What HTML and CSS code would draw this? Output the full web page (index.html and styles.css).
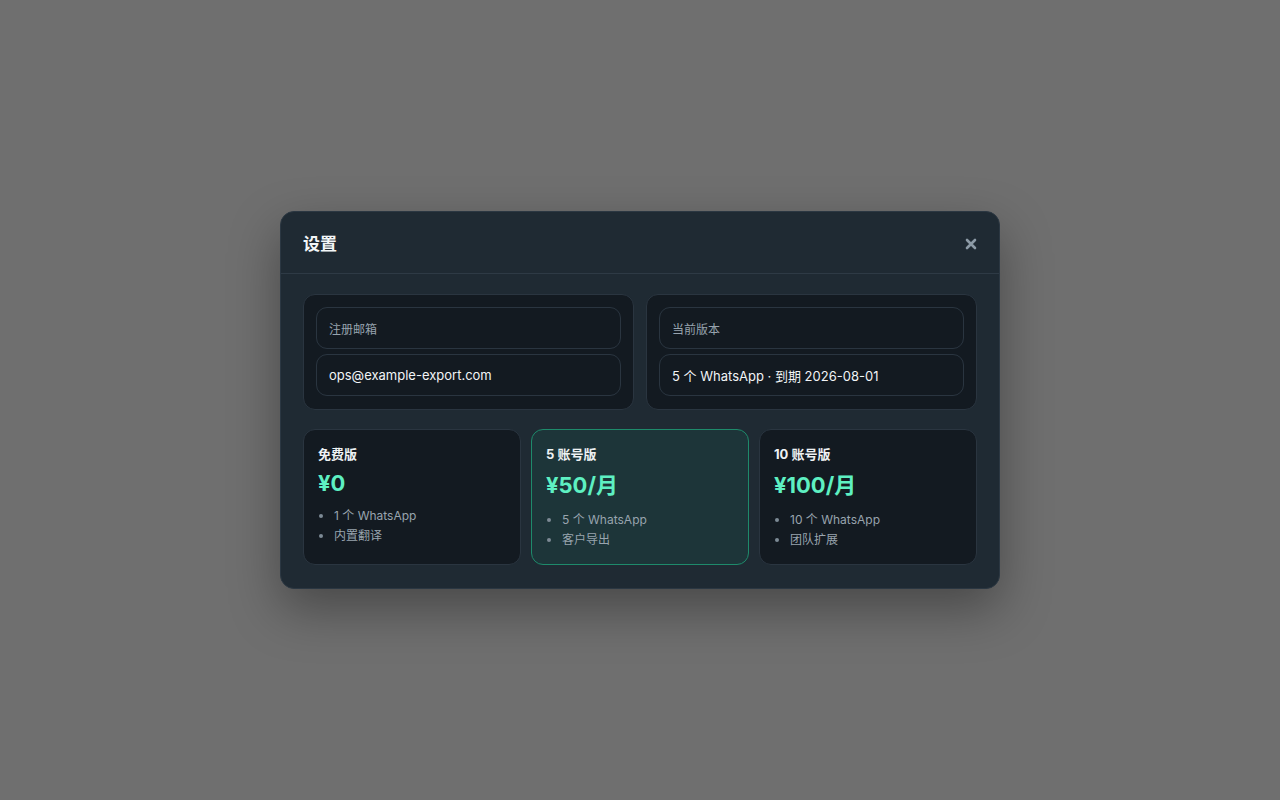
FILE: index.html
```html
<!DOCTYPE html>
<html lang="zh-CN">
<head>
<meta charset="utf-8">
<title>设置</title>
<link rel="stylesheet" href="styles.css">
</head>
<body>
<div class="overlay">
  <div class="modal">
    <div class="modal-header">
      <h2 class="modal-title">设置</h2>
      <button class="close-btn" aria-label="关闭">
        <svg width="12" height="12" viewBox="0 0 12 12"><path d="M2 2 L10 10 M10 2 L2 10" stroke="currentColor" stroke-width="2.6" stroke-linecap="round"/></svg>
      </button>
    </div>
    <div class="modal-body">
      <div class="info-row">
        <div class="info-card">
          <div class="field field-label">注册邮箱</div>
          <div class="field field-value">ops@example-export.com</div>
        </div>
        <div class="info-card">
          <div class="field field-label">当前版本</div>
          <div class="field field-value">5 个 WhatsApp · 到期 2026-08-01</div>
        </div>
      </div>
      <div class="plans">
        <div class="plan">
          <div class="plan-name">免费版</div>
          <div class="plan-price">¥0</div>
          <ul class="plan-features">
            <li>1 个 WhatsApp</li>
            <li>内置翻译</li>
          </ul>
        </div>
        <div class="plan plan-active">
          <div class="plan-name">5 账号版</div>
          <div class="plan-price plan-price-cjk">¥50/月</div>
          <ul class="plan-features">
            <li>5 个 WhatsApp</li>
            <li>客户导出</li>
          </ul>
        </div>
        <div class="plan">
          <div class="plan-name">10 账号版</div>
          <div class="plan-price plan-price-cjk">¥100/月</div>
          <ul class="plan-features">
            <li>10 个 WhatsApp</li>
            <li>团队扩展</li>
          </ul>
        </div>
      </div>
    </div>
  </div>
</div>
</body>
</html>
```

FILE: styles.css
```css
* { box-sizing: border-box; }
html, body {
  margin: 0;
  padding: 0;
  height: 100%;
}
body {
  background: #6f6f6f;
  font-family: Inter, "Noto Sans CJK SC", sans-serif;
  color: #e6edf3;
}
.overlay {
  height: 800px;
  display: flex;
  align-items: center;
  justify-content: center;
}
.modal {
  width: 720px;
  background: #1f2a33;
  border: 1px solid #2b3742;
  border-radius: 14px;
  box-shadow: 0 20px 50px rgba(0, 0, 0, 0.35);
}
.modal-header {
  height: 62px;
  padding: 0 22px;
  display: flex;
  align-items: center;
  justify-content: space-between;
  border-bottom: 1px solid #2e3a45;
}
.modal-title {
  margin: 0;
  font-size: 17px;
  font-weight: 700;
  color: #f3f6f8;
}
.close-btn {
  background: none;
  border: none;
  padding: 0;
  margin-top: 2px;
  color: #8c9aa6;
  display: flex;
  cursor: pointer;
}
.modal-body {
  padding: 20px 22px 23px;
  display: flex;
  flex-direction: column;
  gap: 19px;
}
.info-row {
  display: grid;
  grid-template-columns: 1fr 1fr;
  gap: 12px;
}
.info-card {
  background: #131a21;
  border: 1px solid #2a3540;
  border-radius: 12px;
  padding: 12px 12px 13px;
  display: flex;
  flex-direction: column;
  gap: 5px;
}
.field {
  height: 42px;
  border: 1px solid #2a3540;
  border-radius: 11px;
  padding: 0 12px;
  display: flex;
  align-items: center;
  font-size: 13px;
}
.field-label {
  color: #97a3ae;
  font-size: 12px;
}
.field-value {
  color: #f1f4f6;
}
.plans {
  display: grid;
  grid-template-columns: repeat(3, 1fr);
  gap: 10px;
}
.plan {
  background: #131a21;
  border: 1px solid #2a3540;
  border-radius: 12px;
  padding: 15px 14px 14px;
}
.plan-active {
  background: #1d3539;
  border-color: #1e8a6b;
}
.plan-name {
  font-size: 13px;
  font-weight: 700;
  color: #eef2f4;
  line-height: 18px;
}
.plan-price {
  margin-top: 5px;
  font-size: 22px;
  font-weight: 700;
  color: #5ef0c2;
  line-height: 30px;
}
.plan-price-cjk {
  line-height: 34px;
}
.plan-features {
  margin: 8px 0 0;
  padding-left: 16px;
  font-size: 12px;
  color: #98a4ae;
  line-height: 20px;
}
.plan-features li::marker {
  color: #7d8a95;
}
```
